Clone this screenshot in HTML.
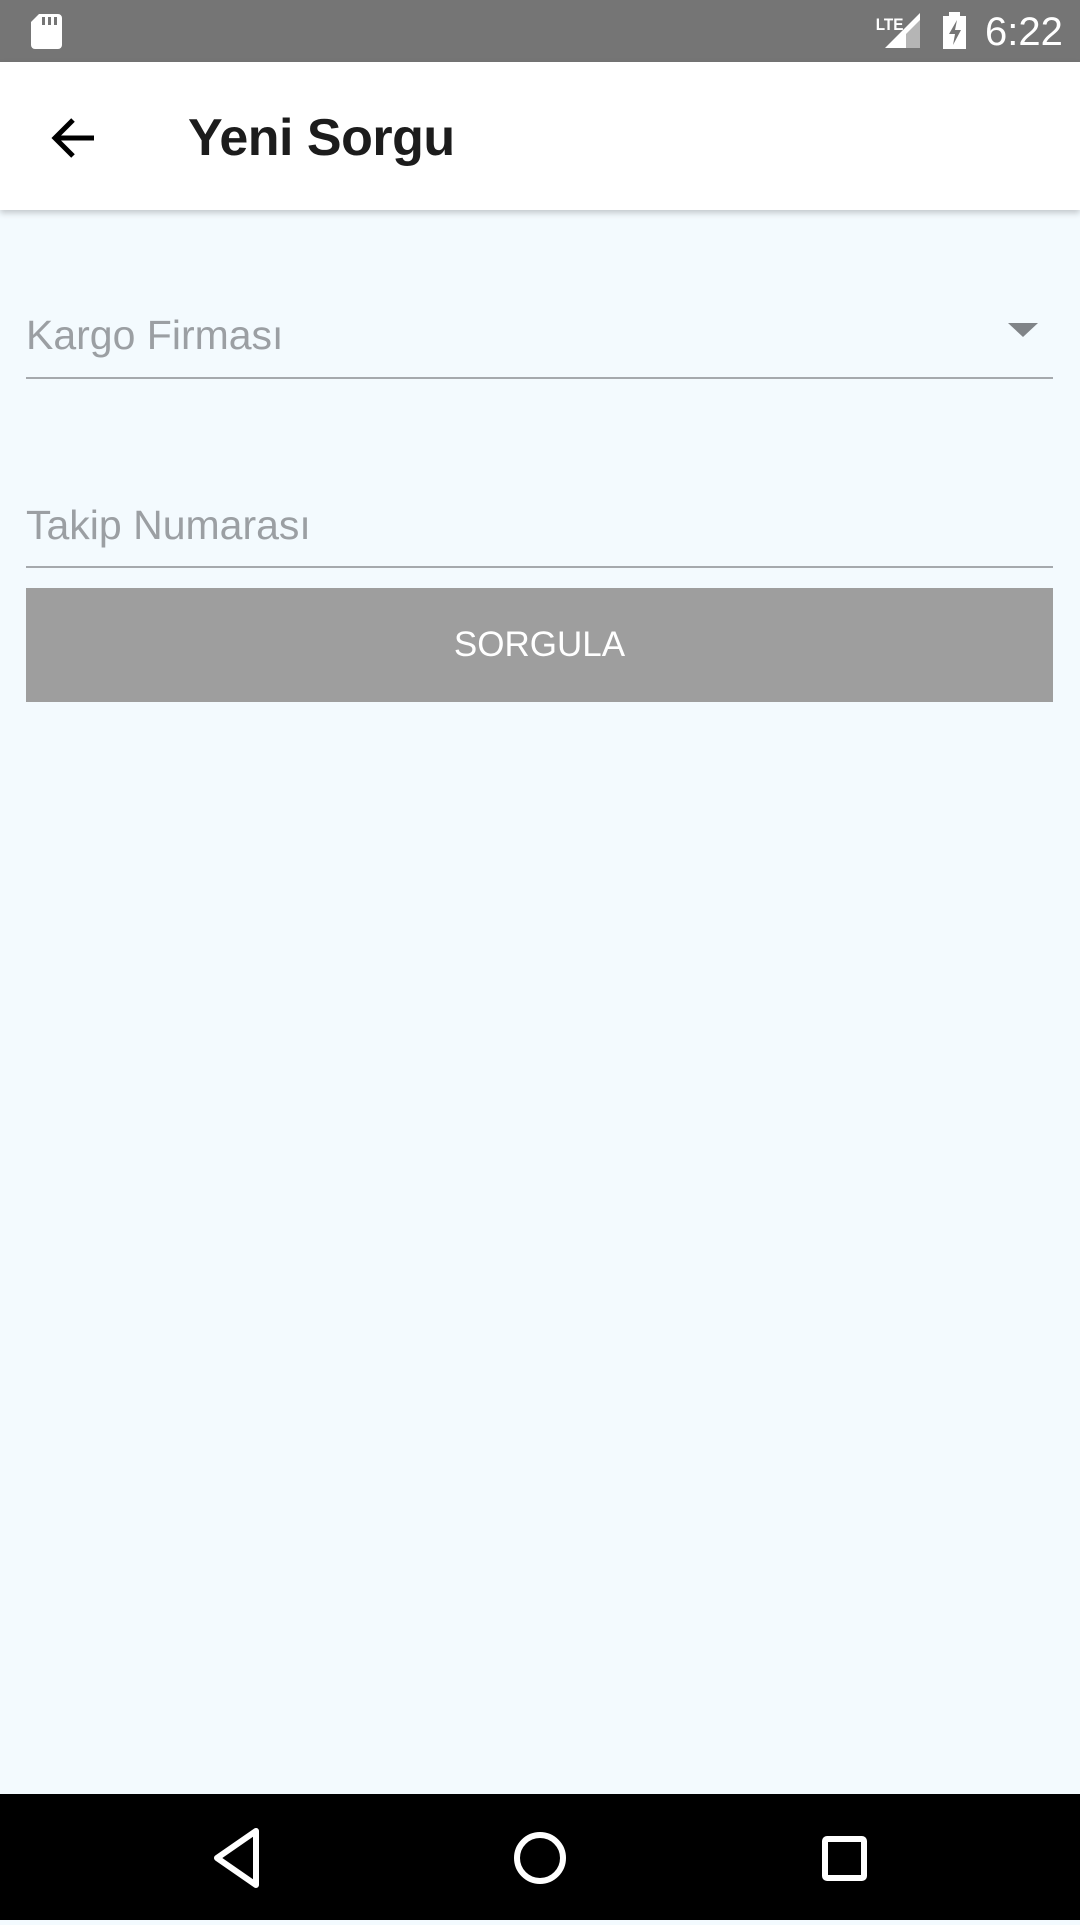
<!DOCTYPE html>
<html><head><meta charset="utf-8"><style>
*{margin:0;padding:0;box-sizing:border-box}
body{width:1080px;height:1920px;background:#f3fafe;font-family:"Liberation Sans",Roboto,sans-serif;position:relative;overflow:hidden}
.sb{position:absolute;top:0;left:0;width:1080px;height:62px;background:#757575}
.ab{position:absolute;top:62px;left:0;width:1080px;height:148px;background:#fff;box-shadow:0 3px 6px rgba(0,0,0,.2)}
.t{position:absolute;left:188px;top:106px;font-size:52px;font-weight:bold;color:#1c1c1c;line-height:60px;letter-spacing:-0.5px}
.ph{position:absolute;left:26px;font-size:41px;color:#9b9fa3;line-height:48px}
.ln{position:absolute;left:26px;width:1027px;height:2px;background:#a5a9ad}
.btn{position:absolute;left:26px;top:588px;width:1027px;height:114px;background:#9e9e9e;color:#fff;font-size:35px;text-align:center;line-height:114px}
.nb{position:absolute;top:1794px;left:0;width:1080px;height:126px;background:#000}
</style></head><body>
<div class="sb">
<svg width="1080" height="62" style="position:absolute;left:0;top:0">
<path d="M34 14h26a4 4 0 0 1 4 4v27a4 4 0 0 1-4 4H37a4 4 0 0 1-4-4V22l8-8z" fill="#fff" transform="translate(-2,0)"/>
<rect x="42" y="17" width="3" height="8" fill="#757575"/><rect x="48" y="17" width="3" height="8" fill="#757575"/><rect x="54" y="17" width="3" height="8" fill="#757575"/>
<text x="876" y="30" font-family="Liberation Sans" font-weight="bold" font-size="17" fill="#fff" transform="scale(0.9,1) translate(97,0)">LTE</text>
<polygon points="885,48 920,13 920,48" fill="#fff"/><polygon points="906,48 920,34 920,48" fill="#fff"/>
<polygon points="906,34 920,20 920,48 906,48" fill="#b5b5b5"/>
<rect x="943" y="16" width="23" height="33" fill="#fff"/><rect x="949" y="12" width="11" height="5" fill="#fff"/>
<polygon points="957,20 949,34 955,34 953,45 961,30 955,30" fill="#757575"/>
<text x="985" y="45" font-family="Liberation Sans" font-size="40" fill="#fff">6:22</text>
</svg></div>
<div class="ab">
<svg width="60" height="60" style="position:absolute;left:44px;top:46px" viewBox="0 0 60 60"><path d="M50 30H12M29 12L11 30l18 18" stroke="#000" stroke-width="5" fill="none"/></svg>
<div class="t" style="top:46px">Yeni Sorgu</div>
</div>
<div class="ph" style="top:311px">Kargo Firması</div>
<svg width="34" height="18" style="position:absolute;left:1006px;top:321px"><polygon points="2,2 32,2 17,16" fill="#808488"/></svg>
<div class="ln" style="top:377px"></div>
<div class="ph" style="top:501px">Takip Numarası</div>
<div class="ln" style="top:566px"></div>
<div class="btn">SORGULA</div>
<div class="nb">
<svg width="1080" height="126">
<polygon points="256,37 256,91 217,64" fill="none" stroke="#fff" stroke-width="6" stroke-linejoin="round"/>
<circle cx="540" cy="64" r="23" fill="none" stroke="#fff" stroke-width="6"/>
<rect x="825" y="45" width="39" height="39" rx="2" fill="none" stroke="#fff" stroke-width="6"/>
</svg></div>
</body></html>
